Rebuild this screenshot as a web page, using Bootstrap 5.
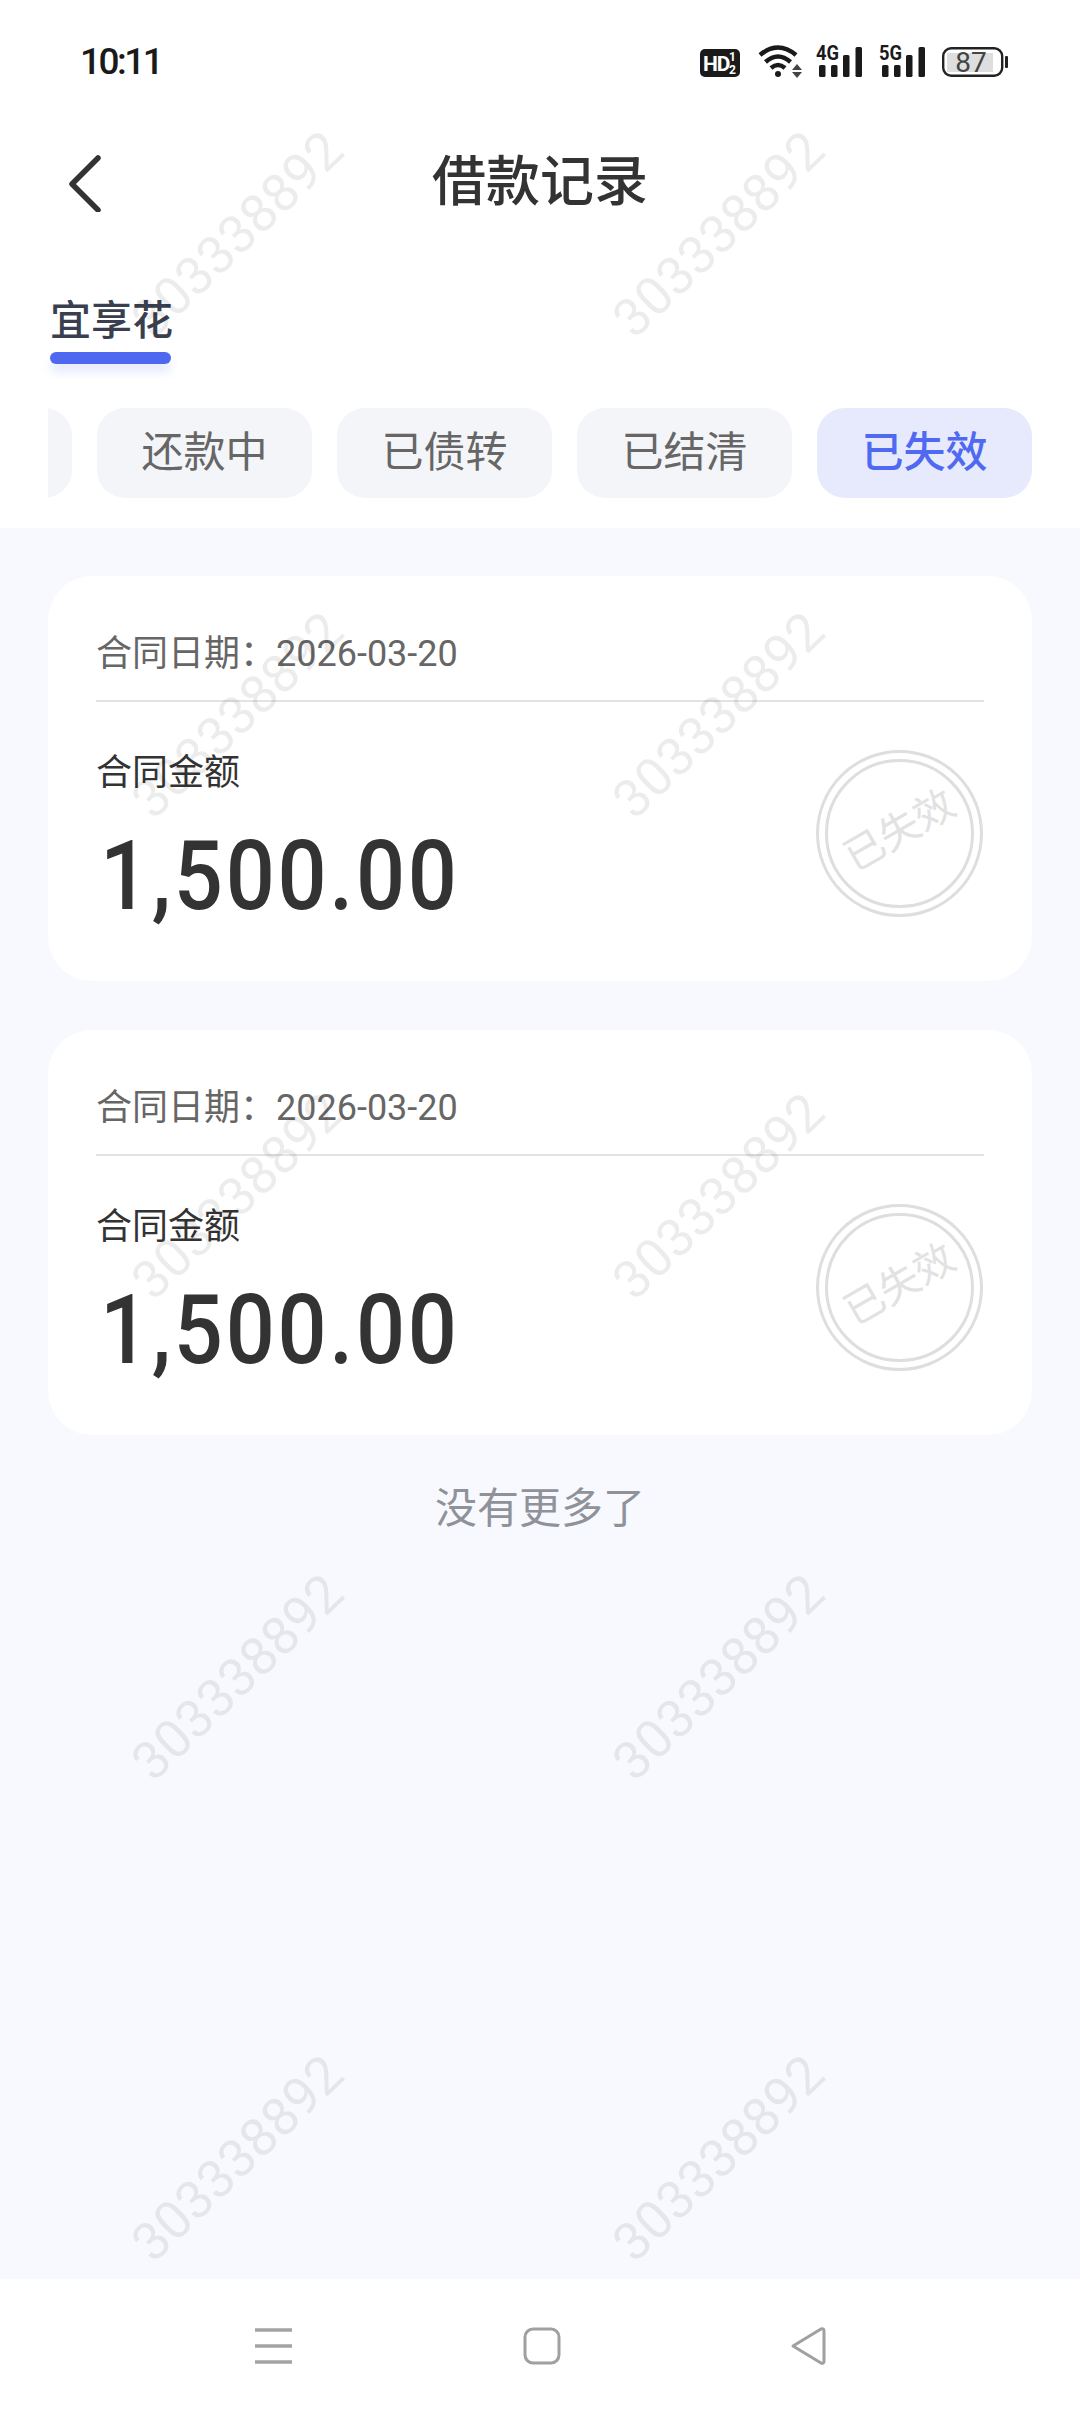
<!DOCTYPE html>
<html>
<head>
    <meta charset="utf-8">
    <title>借款记录</title>
    <link rel="stylesheet" href="https://cdn.jsdelivr.net/npm/bootstrap@5.3.0/dist/css/bootstrap.min.css">
    <style>
        html, body { height: 2412px; }
        body {
            width: 1080px;
            overflow: hidden;
            background: #f8f9fe;
            font-family: Roboto, "Noto Sans CJK SC", sans-serif;
            color: #333;
        }
        .app-page { height: 2412px; }
        .top-area { height: 528px; }
        .status-row { height: 124px; padding: 39px 72px 0 80px; }
        .clock { font-size: 37px; line-height: 46px; font-weight: 500; letter-spacing: -2.5px; color: #1a1a1a; }
        .status-icons { margin-top: -1px; }
        .status-icons svg { display: block; overflow: visible; }
        .status-icons text { font-family: Roboto, sans-serif; }
        .hd-icon { margin: 11px 18px 0 0; }
        .wifi-icon { margin: 7px 13px 0 0; }
        .sig-icon { margin: 1px 17px 0 0; }
        .batt-icon { margin-top: 5px; }
        .title-row { height: 116px; }
        .back-btn { left: 65px; top: 28px; }
        .page-title { font-size: 54px; line-height: 118px; height: 116px; font-weight: 500; color: #333; }
        .tab-row { padding: 53px 0 0 50px; height: 123px; }
        .tab-name { font-size: 41px; line-height: 57px; font-weight: 500; color: #3a3f50; width: 121px; white-space: nowrap; margin-bottom: 2px; }
        .tab-bar {
            width: 121px;
            height: 12px;
            border-radius: 6px;
            background: #4e68f0;
            box-shadow: 0 8px 10px rgba(78, 104, 240, .14);
        }
        .chip-row { margin: 45px 48px 0; height: 90px; overflow: hidden; gap: 25px; }
        .chip-item {
            flex: 0 0 215px;
            height: 90px;
            border-radius: 28px;
            background: #f4f5f9;
            color: #666;
            font-size: 42px;
            line-height: 90px;
            text-align: center;
        }
        .chip-on { background: #e6eafc; color: #4f6af0; font-weight: 500; }
        .list-area { padding: 48px 48px 0; gap: 49px; }
        .loan-card { height: 405px; border-radius: 44px; background: #fff; padding: 0 48px; }
        .date-line {
            height: 126px;
            padding-top: 51px;
            font-size: 36px;
            line-height: 54px;
            color: #666;
            border-bottom: 2px solid #e3e3e3;
        }
        .amount-label { margin-top: 46px; font-size: 36px; line-height: 50px; color: #333; }
        .amount-num {
            margin: 23px 0 0 4px;
            font-size: 96px;
            line-height: 110px;
            font-weight: 500;
            letter-spacing: 3px;
            color: #333;
            transform: scaleX(.9);
            transform-origin: left center;
        }
        .stamp-outer {
            width: 167px;
            height: 167px;
            margin-top: 48px;
            margin-right: 1px;
            border: 3px solid #dedede;
            border-radius: 50%;
        }
        .stamp-inner {
            width: 149px;
            height: 149px;
            border: 3px solid #dedede;
            border-radius: 50%;
        }
        .stamp-text { font-size: 40px; line-height: 1; color: #e2e2e2; transform: rotate(-30deg); white-space: nowrap; margin-top: -6px; }
        .no-more { margin-top: -5px; font-size: 42px; line-height: 60px; color: #8f9299; text-align: center; }
        .bottom-nav { height: 133px; background: #fff; }
        .nav-menu { left: 255px; top: 48px; }
        .nav-home { left: 523px; top: 48px; }
        .nav-back { left: 789px; top: 47px; }
        .mark-layer {
            left: 0;
            top: -6px;
            display: grid;
            grid-template-columns: 481px 481px;
            grid-auto-rows: 481px;
            pointer-events: none;
            z-index: 5;
        }
        .mark-text {
            font-size: 53px;
            font-weight: 400;
            color: rgba(0, 0, 0, .075);
            transform: translateX(-2px) rotate(-44deg);
            white-space: nowrap;
        }
    </style>
</head>
<body>
    <div class="app-page position-relative d-flex flex-column">
        <div class="top-area bg-white flex-shrink-0">
            <div class="status-row d-flex justify-content-between align-items-start">
                <div class="clock">10:11</div>
                <div class="status-icons d-flex align-items-start">
                    <svg class="hd-icon" width="40" height="28" viewBox="0 0 40 28">
                        <rect width="40" height="28" rx="5" fill="#1a1a1a"/>
                        <text x="3" y="22" font-size="21" font-weight="700" fill="#fff" letter-spacing="-1">HD</text>
                        <text x="29" y="12" font-size="12" font-weight="700" fill="#fff">1</text>
                        <text x="29" y="25" font-size="12" font-weight="700" fill="#fff">2</text>
                    </svg>
                    <svg class="wifi-icon" width="45" height="33" viewBox="0 0 45 33">
                        <path d="M2 10 Q20 -5 38 10" fill="none" stroke="#1a1a1a" stroke-width="4.5"/>
                        <path d="M7.5 17 Q20 6 32.5 17" fill="none" stroke="#1a1a1a" stroke-width="4.5"/>
                        <path d="M13 23 Q20 17 27 23" fill="none" stroke="#1a1a1a" stroke-width="4.5"/>
                        <circle cx="20" cy="29" r="3" fill="#1a1a1a"/>
                        <path d="M39 19 L44 25 L34 25 Z M34 27 L44 27 L39 33 Z" fill="#444"/>
                    </svg>
                    <svg class="sig-icon" width="46" height="38" viewBox="0 -6 46 38">
                        <text x="0" y="15" font-size="21" font-weight="700" fill="#1a1a1a" textLength="23" lengthAdjust="spacingAndGlyphs">4G</text>
                        <rect x="3" y="20" width="6.5" height="12" rx="1.5" fill="#1a1a1a"/>
                        <rect x="15" y="20" width="6.5" height="12" rx="1.5" fill="#1a1a1a"/>
                        <rect x="27" y="10" width="6.5" height="22" rx="1.5" fill="#1a1a1a"/>
                        <rect x="39.5" y="2" width="6.5" height="30" rx="1.5" fill="#1a1a1a"/>
                    </svg>
                    <svg class="sig-icon" width="46" height="38" viewBox="0 -6 46 38">
                        <text x="0" y="15" font-size="21" font-weight="700" fill="#1a1a1a" textLength="23" lengthAdjust="spacingAndGlyphs">5G</text>
                        <rect x="3" y="20" width="6.5" height="12" rx="1.5" fill="#1a1a1a"/>
                        <rect x="15" y="20" width="6.5" height="12" rx="1.5" fill="#1a1a1a"/>
                        <rect x="27" y="10" width="6.5" height="22" rx="1.5" fill="#1a1a1a"/>
                        <rect x="39.5" y="2" width="6.5" height="30" rx="1.5" fill="#1a1a1a"/>
                    </svg>
                    <svg class="batt-icon" width="66" height="38" viewBox="0 -4 66 38">
                        <rect x="1.2" y="1.2" width="59" height="27.6" rx="8" fill="none" stroke="#222" stroke-width="2.4"/>
                        <rect x="5" y="6" width="46" height="19" fill="#dedede"/>
                        <rect x="63" y="9" width="3" height="12" rx="1" fill="#222"/>
                        <text x="29" y="25" font-size="28" fill="#444" text-anchor="middle">87</text>
                    </svg>
                </div>
            </div>
            <div class="title-row position-relative text-center">
                <svg class="back-btn position-absolute" width="40" height="60" viewBox="0 0 40 60">
                    <polyline points="33,6 7,32 33,58" fill="none" stroke="#333" stroke-width="5.5" stroke-linecap="round" stroke-linejoin="round"/>
                </svg>
                <div class="page-title">借款记录</div>
            </div>
            <div class="tab-row">
                <div class="tab-name">宜享花</div>
                <div class="tab-bar"></div>
            </div>
            <div class="chip-row d-flex justify-content-end">
                <div class="chip-item"></div>
                <div class="chip-item">还款中</div>
                <div class="chip-item">已债转</div>
                <div class="chip-item">已结清</div>
                <div class="chip-item chip-on">已失效</div>
            </div>
        </div>

        <div class="list-area flex-grow-1 d-flex flex-column">
            <div class="card border-0 loan-card flex-shrink-0">
                <div class="date-line">合同日期：2026-03-20</div>
                <div class="d-flex justify-content-between align-items-start">
                    <div>
                        <div class="amount-label">合同金额</div>
                        <div class="amount-num">1,500.00</div>
                    </div>
                    <div class="stamp-outer d-flex align-items-center justify-content-center">
                        <div class="stamp-inner d-flex align-items-center justify-content-center">
                            <span class="stamp-text">已失效</span>
                        </div>
                    </div>
                </div>
            </div>
            <div class="card border-0 loan-card flex-shrink-0">
                <div class="date-line">合同日期：2026-03-20</div>
                <div class="d-flex justify-content-between align-items-start">
                    <div>
                        <div class="amount-label">合同金额</div>
                        <div class="amount-num">1,500.00</div>
                    </div>
                    <div class="stamp-outer d-flex align-items-center justify-content-center">
                        <div class="stamp-inner d-flex align-items-center justify-content-center">
                            <span class="stamp-text">已失效</span>
                        </div>
                    </div>
                </div>
            </div>
            <div class="no-more">没有更多了</div>
        </div>

        <div class="bottom-nav position-relative flex-shrink-0">
            <svg class="nav-menu position-absolute" width="37" height="38" viewBox="0 0 37 38">
                <path d="M0 3H37M0 19H37M0 35H37" stroke="#a3a3a3" stroke-width="3.6"/>
            </svg>
            <svg class="nav-home position-absolute" width="38" height="38" viewBox="0 0 38 38">
                <rect x="2" y="2" width="34" height="34" rx="8" fill="none" stroke="#a0a0a0" stroke-width="3"/>
            </svg>
            <svg class="nav-back position-absolute" width="38" height="40" viewBox="0 0 38 40">
                <path d="M4 20 L32 3 Q35 2 35 5 L35 35 Q35 38 32 37 Z" fill="none" stroke="#a0a0a0" stroke-width="3" stroke-linejoin="round"/>
            </svg>
        </div>

        <div class="mark-layer position-absolute">
            <div class="d-flex align-items-center justify-content-center"><span class="mark-text">303338892</span></div>
            <div class="d-flex align-items-center justify-content-center"><span class="mark-text">303338892</span></div>
            <div class="d-flex align-items-center justify-content-center"><span class="mark-text">303338892</span></div>
            <div class="d-flex align-items-center justify-content-center"><span class="mark-text">303338892</span></div>
            <div class="d-flex align-items-center justify-content-center"><span class="mark-text">303338892</span></div>
            <div class="d-flex align-items-center justify-content-center"><span class="mark-text">303338892</span></div>
            <div class="d-flex align-items-center justify-content-center"><span class="mark-text">303338892</span></div>
            <div class="d-flex align-items-center justify-content-center"><span class="mark-text">303338892</span></div>
            <div class="d-flex align-items-center justify-content-center"><span class="mark-text">303338892</span></div>
            <div class="d-flex align-items-center justify-content-center"><span class="mark-text">303338892</span></div>
        </div>
    </div>
</body>
</html>
